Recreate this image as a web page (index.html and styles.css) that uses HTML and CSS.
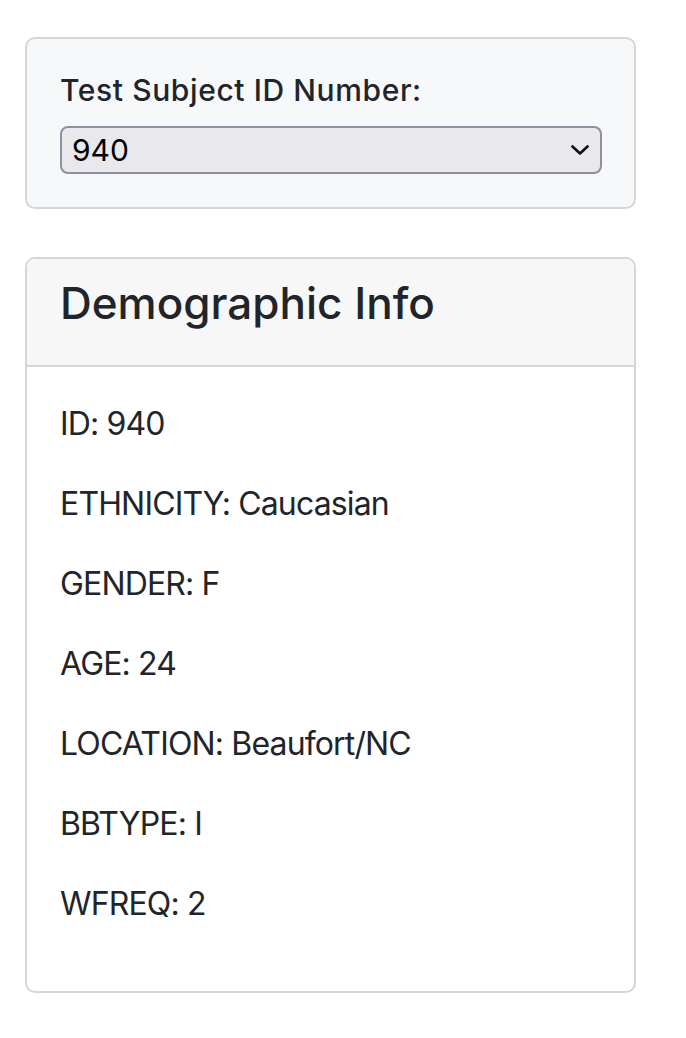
FILE: index.html
```html
<!DOCTYPE html>
<html lang="en">
<head>
<meta charset="utf-8">
<title>Demographic Info</title>
<link rel="stylesheet" href="styles.css">
</head>
<body>
<main class="page">
  <section class="well">
    <label class="well-label" for="selDataset">Test Subject ID Number:</label>
    <div class="select-wrap">
      <select id="selDataset" class="select">
        <option>940</option>
      </select>
      <svg class="chevron" width="18" height="10" viewBox="0 0 18 10" aria-hidden="true">
        <path d="M1.5 1.5 L9 8.5 L16.5 1.5" fill="none" stroke="#111" stroke-width="2.6" stroke-linecap="round" stroke-linejoin="round"/>
      </svg>
    </div>
  </section>

  <section class="card">
    <header class="card-header">
      <h3 class="card-title">Demographic Info</h3>
    </header>
    <div class="card-body">
      <p class="row">ID: 940</p>
      <p class="row">ETHNICITY: Caucasian</p>
      <p class="row">GENDER: F</p>
      <p class="row">AGE: 24</p>
      <p class="row">LOCATION: Beaufort/NC</p>
      <p class="row">BBTYPE: I</p>
      <p class="row">WFREQ: 2</p>
    </div>
  </section>
</main>
</body>
</html>
```

FILE: styles.css
```css
* { box-sizing: border-box; }

html, body {
  margin: 0;
  padding: 0;
  background: #ffffff;
}

body {
  font-family: Inter, Roboto, "Liberation Sans", sans-serif;
  color: #212529;
}

.page {
  width: 611px;
  margin-left: 25px;
  padding-top: 37px;
  display: flex;
  flex-direction: column;
  gap: 48px;
}

.well {
  background: #f7f8fa;
  border: 2px solid #d6d6d8;
  border-radius: 10px;
  padding: 30px 32px 33px 33px;
  display: flex;
  flex-direction: column;
}

.well-label {
  font-size: 30px;
  font-weight: 500;
  line-height: 42px;
  letter-spacing: 0.6px;
  margin-bottom: 15px;
}

.select-wrap {
  position: relative;
}

.select {
  -webkit-appearance: none;
  appearance: none;
  display: block;
  width: 100%;
  height: 48px;
  margin: 0;
  padding: 0 40px 0 10px;
  border: 2px solid #8f8f9d;
  border-radius: 8px;
  background: #e9e9ed;
  color: #000;
  font-family: Inter, Roboto, "Liberation Sans", sans-serif;
  font-size: 30px;
  line-height: 44px;
}

.chevron {
  position: absolute;
  right: 13px;
  top: 19px;
  pointer-events: none;
}

.card {
  background: #ffffff;
  border: 2px solid #d6d6d8;
  border-radius: 10px;
  overflow: hidden;
}

.card-header {
  background: #f7f7f7;
  border-bottom: 2px solid #d6d6d8;
  padding: 19px 33px 37px;
}

.card-title {
  margin: 0;
  font-size: 44px;
  font-weight: 500;
  line-height: 50px;
  letter-spacing: 0;
}

.card-body {
  padding: 33px 33px 31px;
}

.row {
  margin: 0 0 32px;
  font-size: 32px;
  line-height: 48px;
  letter-spacing: -0.85px;
}
```
